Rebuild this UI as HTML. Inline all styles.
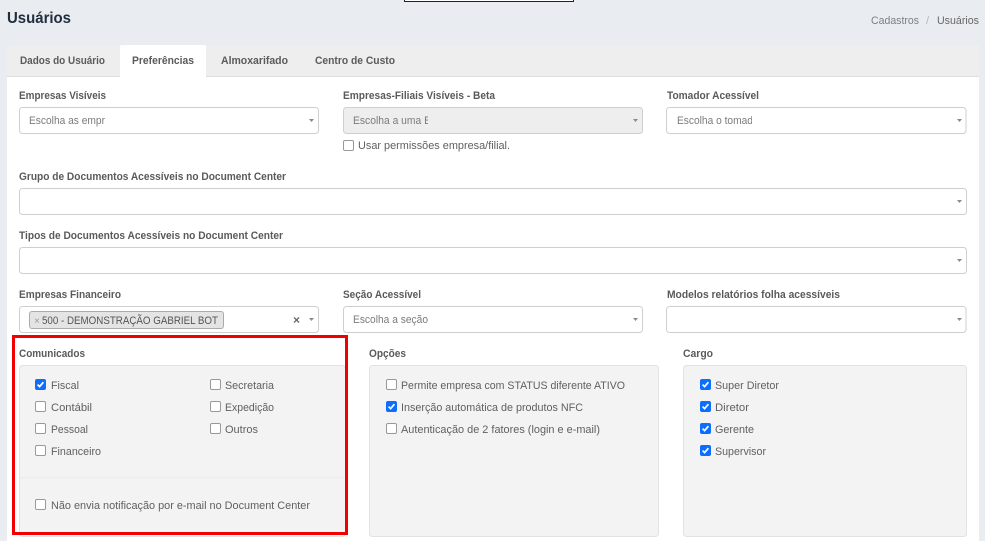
<!DOCTYPE html>
<html lang="pt-BR">
<head>
<meta charset="utf-8">
<title>Usuários</title>
<style>
html,body{margin:0;padding:0;width:985px;height:541px;overflow:hidden;background:#e9ecf1}
svg{display:block}
svg.root{filter:blur(.3px)}
text{font-family:"Liberation Sans",sans-serif;font-size:11px;fill:#606060}
.b{font-weight:700;fill:#5a5a5a}
.ph{fill:#7b7b7b}
.inp{fill:#fff;stroke:#cfcfcf;stroke-width:1}
.pan{fill:#f3f3f3;stroke:#e2e2e2;stroke-width:1}
.cb{fill:#fff;stroke:#999;stroke-width:1}
.cc{fill:#0d6efd;stroke:#0d6efd;stroke-width:1}
.ck{fill:none;stroke:#fff;stroke-width:1.7}
.ar{fill:#8a8a8a}
</style>
</head>
<body>
<svg class="root" width="985" height="541" viewBox="0 0 985 541" xmlns="http://www.w3.org/2000/svg">
<defs>
<g id="off"><rect class="cb" x=".5" y=".5" width="10" height="10" rx="1.5"/></g>
<g id="on"><rect class="cc" x=".5" y=".5" width="10" height="10" rx="1.5"/><path class="ck" d="M2.6 5.6 L4.6 7.6 L8.4 3.2"/></g>
<path id="arr" class="ar" d="M0 0 H5 L2.5 3 Z"/>
</defs>

<!-- top strip -->
<rect x="404.5" y="-2" width="169" height="3.5" fill="#fff" stroke="#222" stroke-width="1"/>

<!-- header -->
<text x="7" y="23" textLength="64" lengthAdjust="spacingAndGlyphs" style="font-size:16px;font-weight:700;fill:#1f2d3d">Usuários</text>
<text x="871" y="24" textLength="48" lengthAdjust="spacingAndGlyphs" style="fill:#7c7f83">Cadastros</text>
<text x="926" y="24" style="fill:#b5b8bc">/</text>
<text x="937" y="24" textLength="42" lengthAdjust="spacingAndGlyphs" style="fill:#666">Usuários</text>

<!-- card -->
<rect x="7" y="45" width="972" height="496" fill="#fff"/>
<rect x="7" y="45" width="972" height="31" fill="#eeeeee"/>
<rect x="7" y="76" width="972" height="1" fill="#dedede"/>
<path d="M120 77 V47 Q120 45 122 45 H204 Q206 45 206 47 V77 Z" fill="#fff"/>
<text class="b" x="20" y="64" textLength="85" lengthAdjust="spacingAndGlyphs">Dados do Usuário</text>
<text class="b" x="132" y="64" textLength="62" lengthAdjust="spacingAndGlyphs">Preferências</text>
<text class="b" x="221" y="64" textLength="67" lengthAdjust="spacingAndGlyphs">Almoxarifado</text>
<text class="b" x="315" y="64" textLength="80" lengthAdjust="spacingAndGlyphs">Centro de Custo</text>

<!-- row 1 -->
<text class="b" x="19" y="99" textLength="87" lengthAdjust="spacingAndGlyphs">Empresas Visíveis</text>
<text class="b" x="343" y="99" textLength="152" lengthAdjust="spacingAndGlyphs">Empresas-Filiais Visíveis - Beta</text>
<text class="b" x="667" y="99" textLength="92" lengthAdjust="spacingAndGlyphs">Tomador Acessível</text>

<rect class="inp" x="19.5" y="107.5" width="299" height="26" rx="3"/>
<rect x="343.5" y="107.5" width="299" height="26" rx="3" fill="#eeeeee" stroke="#cfcfcf"/>
<rect class="inp" x="666.5" y="107.5" width="299.5" height="26" rx="3"/>

<svg x="29" y="110" width="76" height="22"><text class="ph" x="0" y="14" textLength="76" lengthAdjust="spacingAndGlyphs">Escolha as empr</text></svg>
<svg x="353" y="110" width="75" height="22"><text class="ph" x="0" y="14" textLength="78" lengthAdjust="spacingAndGlyphs">Escolha a uma E</text></svg>
<svg x="677" y="110" width="75" height="22"><text class="ph" x="0" y="14" textLength="85" lengthAdjust="spacingAndGlyphs">Escolha o tomador</text></svg>
<use href="#arr" x="309" y="119"/>
<use href="#arr" x="633" y="119"/>
<use href="#arr" x="957" y="119"/>

<use href="#off" x="343" y="140"/>
<text x="358" y="149" textLength="152" lengthAdjust="spacingAndGlyphs">Usar permissões empresa/filial.</text>

<!-- row 2 -->
<text class="b" x="19" y="180" textLength="267" lengthAdjust="spacingAndGlyphs">Grupo de Documentos Acessíveis no Document Center</text>
<rect class="inp" x="19.5" y="188.5" width="947" height="26" rx="3"/>
<use href="#arr" x="957" y="200"/>

<!-- row 3 -->
<text class="b" x="19" y="239" textLength="264" lengthAdjust="spacingAndGlyphs">Tipos de Documentos Acessíveis no Document Center</text>
<rect class="inp" x="19.5" y="247.5" width="947" height="26" rx="3"/>
<use href="#arr" x="957" y="259"/>

<!-- row 4 -->
<text class="b" x="19" y="298" textLength="102" lengthAdjust="spacingAndGlyphs">Empresas Financeiro</text>
<text class="b" x="343" y="298" textLength="78" lengthAdjust="spacingAndGlyphs">Seção Acessível</text>
<text class="b" x="667" y="298" textLength="173" lengthAdjust="spacingAndGlyphs">Modelos relatórios folha acessíveis</text>

<rect class="inp" x="19.5" y="306.5" width="299" height="26" rx="3"/>
<rect class="inp" x="343.5" y="306.5" width="299" height="26" rx="3"/>
<rect class="inp" x="666.5" y="306.5" width="299.5" height="26" rx="3"/>

<rect x="29.5" y="311.5" width="194" height="17" rx="2.5" fill="#e4e4e4" stroke="#aaa"/>
<text x="34" y="324" style="font-size:10px;fill:#999">×</text>
<text x="42" y="324" textLength="176" lengthAdjust="spacingAndGlyphs" style="fill:#555">500 - DEMONSTRAÇÃO GABRIEL BOT</text>
<text x="293" y="324" style="font-size:12px;font-weight:700;fill:#666">×</text>
<use href="#arr" x="309" y="318"/>
<text class="ph" x="353" y="323" textLength="75" lengthAdjust="spacingAndGlyphs">Escolha a seção</text>
<use href="#arr" x="633" y="318"/>
<use href="#arr" x="957" y="318"/>

<!-- headings -->
<text class="b" x="19" y="357" textLength="66" lengthAdjust="spacingAndGlyphs">Comunicados</text>
<text class="b" x="369" y="357" textLength="37" lengthAdjust="spacingAndGlyphs">Opções</text>
<text class="b" x="683" y="357" textLength="30" lengthAdjust="spacingAndGlyphs">Cargo</text>

<!-- panels -->
<rect class="pan" x="19.5" y="365.5" width="326" height="171" rx="3"/>
<rect class="pan" x="369.5" y="365.5" width="289" height="171" rx="3"/>
<rect class="pan" x="683.5" y="365.5" width="283" height="171" rx="3"/>
<rect x="20" y="477" width="325" height="1" fill="#ececec"/>

<!-- comunicados -->
<use href="#on" x="35" y="379"/>
<text x="51" y="389" textLength="28" lengthAdjust="spacingAndGlyphs">Fiscal</text>
<use href="#off" x="35" y="401"/>
<text x="51" y="411" textLength="41" lengthAdjust="spacingAndGlyphs">Contábil</text>
<use href="#off" x="35" y="423"/>
<text x="51" y="433" textLength="37" lengthAdjust="spacingAndGlyphs">Pessoal</text>
<use href="#off" x="35" y="445"/>
<text x="51" y="455" textLength="50" lengthAdjust="spacingAndGlyphs">Financeiro</text>
<use href="#off" x="210" y="379"/>
<text x="225" y="389" textLength="49" lengthAdjust="spacingAndGlyphs">Secretaria</text>
<use href="#off" x="210" y="401"/>
<text x="225" y="411" textLength="49" lengthAdjust="spacingAndGlyphs">Expedição</text>
<use href="#off" x="210" y="423"/>
<text x="225" y="433" textLength="33" lengthAdjust="spacingAndGlyphs">Outros</text>
<use href="#off" x="35" y="499"/>
<text x="51" y="509" textLength="259" lengthAdjust="spacingAndGlyphs">Não envia notificação por e-mail no Document Center</text>

<!-- opções -->
<use href="#off" x="386" y="379"/>
<text x="401" y="389" textLength="224" lengthAdjust="spacingAndGlyphs">Permite empresa com STATUS diferente ATIVO</text>
<use href="#on" x="386" y="401"/>
<text x="401" y="411" textLength="182" lengthAdjust="spacingAndGlyphs">Inserção automática de produtos NFC</text>
<use href="#off" x="386" y="423"/>
<text x="401" y="433" textLength="199" lengthAdjust="spacingAndGlyphs">Autenticação de 2 fatores (login e e-mail)</text>

<!-- cargo -->
<use href="#on" x="700" y="379"/>
<text x="715" y="389" textLength="64" lengthAdjust="spacingAndGlyphs">Super Diretor</text>
<use href="#on" x="700" y="401"/>
<text x="715" y="411" textLength="34" lengthAdjust="spacingAndGlyphs">Diretor</text>
<use href="#on" x="700" y="423"/>
<text x="715" y="433" textLength="39" lengthAdjust="spacingAndGlyphs">Gerente</text>
<use href="#on" x="700" y="445"/>
<text x="715" y="455" textLength="51" lengthAdjust="spacingAndGlyphs">Supervisor</text>

<!-- red highlight -->
<rect x="13.5" y="336.5" width="333" height="197" fill="none" stroke="#f00000" stroke-width="3"/>
</svg>
</body>
</html>
